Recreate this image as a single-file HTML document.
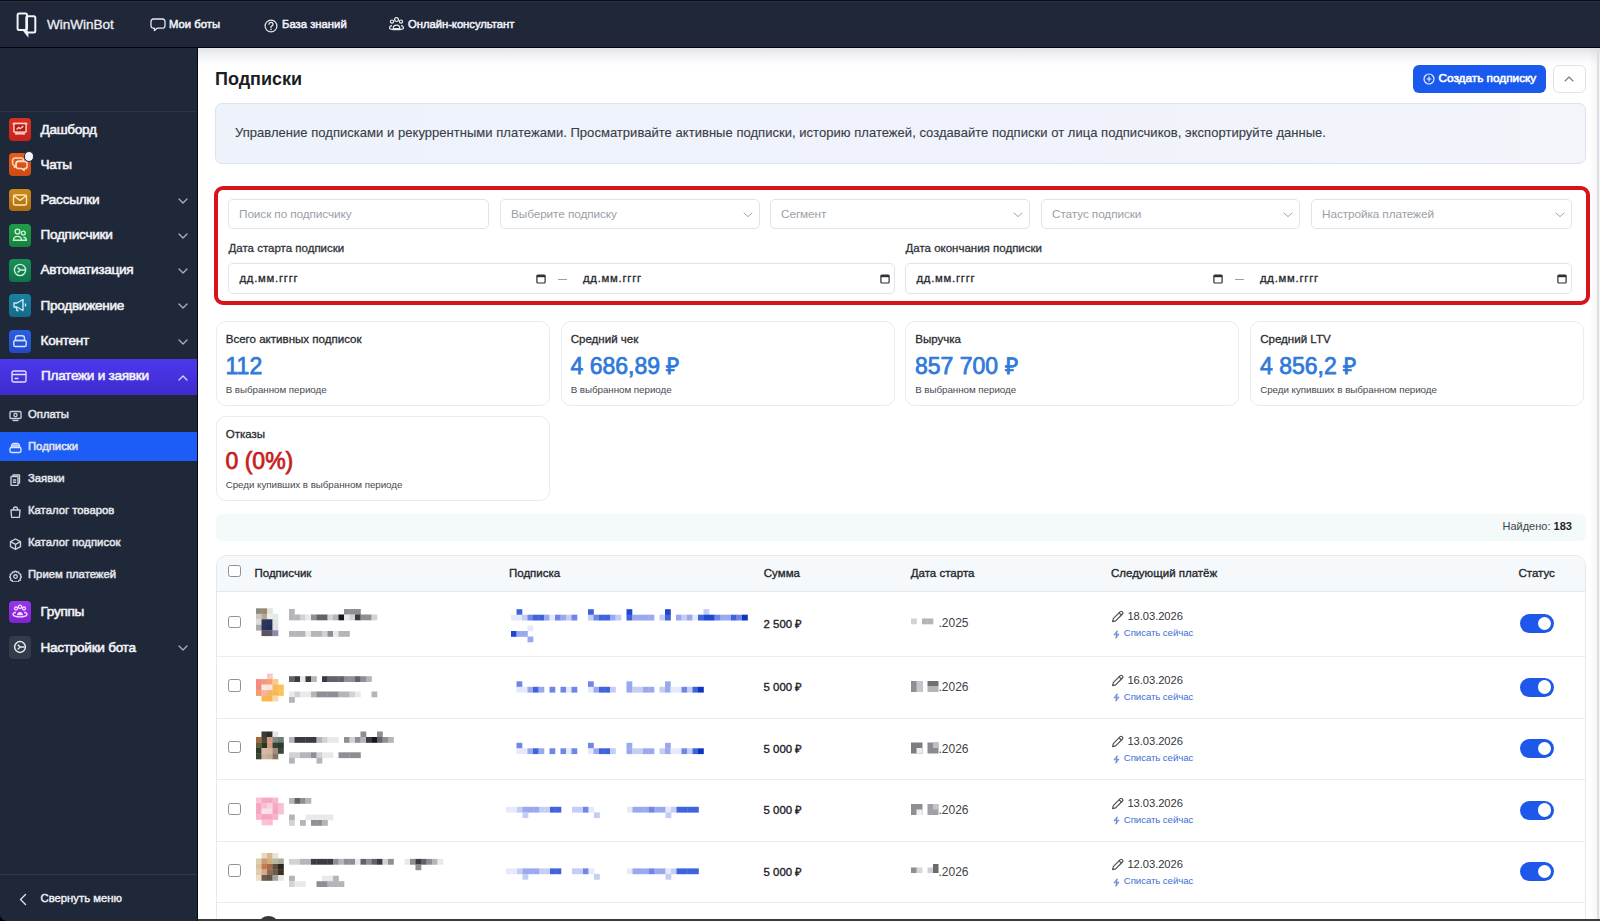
<!DOCTYPE html>
<html lang="ru">
<head>
<meta charset="utf-8">
<title>Подписки — WinWinBot</title>
<style>
*{box-sizing:border-box;margin:0;padding:0}
html,body{width:1600px;height:921px;overflow:hidden;background:#000}
body{font-family:"Liberation Sans",sans-serif;color:#222;position:relative}
.abs{position:absolute}
#hdr{position:absolute;left:0;top:0;width:1600px;height:48px;background:linear-gradient(#0c111b 0,#0c111b 1px,#272e3a 1.5px,#1f2739 3.5px);border-bottom:1.3px solid #03050a}
#side{position:absolute;left:0;top:48px;width:198px;height:873px;background:#1f2839;border-right:1px solid #06080d;border-bottom-left-radius:7px}
#main{position:absolute;left:198px;top:48px;width:1402px;height:873px;background:#fff;overflow:hidden}
#main .topshade{position:absolute;left:0;top:0;width:100%;height:18px;background:linear-gradient(#e2e3e7,#f3f3f5 45%,#fff)}
#main .rstrip{position:absolute;right:0;top:0;width:9px;height:100%;background:linear-gradient(90deg,rgba(0,0,0,.012),rgba(0,0,0,.04))}
#main .rstrip:after{content:"";position:absolute;right:1.5px;top:0;width:1.5px;height:100%;background:#dedee0}
#main .botline{position:absolute;left:0;bottom:0;width:100%;height:2px;background:#3a3a3c}
.t{position:absolute;white-space:nowrap;line-height:1}

.ibox{position:absolute;left:9px;width:22px;height:22.5px;border-radius:4px}
.ibox svg{position:absolute;left:0;top:0}
.slab{left:40.5px;font-size:13.6px;font-weight:400;color:#f2f3f6;-webkit-text-stroke:0.55px #f2f3f6;letter-spacing:-0.28px}
.chev{position:absolute;left:178px}
.ssub{left:28px;font-size:11.3px;font-weight:400;color:#e3e5ea;-webkit-text-stroke:0.5px #e3e5ea;letter-spacing:0px}

.pg{position:absolute;left:-198px;top:-48px;width:1600px;height:921px}
.inp{position:absolute;top:199px;height:30px;border:1px solid #e0e3e7;border-radius:5px;background:#fff}
.ph{font-size:11.8px;color:#9a9fa7;letter-spacing:-0.1px}
.flab{font-size:11.5px;font-weight:400;color:#30343b;-webkit-text-stroke:0.3px #30343b;letter-spacing:0px}
.dgrp{top:263px;height:31px;border:1px solid #e0e3e7;border-radius:5px;background:#fff}
.dph{font-size:11.3px;color:#26282d;letter-spacing:0.75px;-webkit-text-stroke:0.3px #26282d}
.card{position:absolute;width:334px;height:85px;border:1px solid #e9ebee;border-radius:10px;background:#fff}
.clab{font-size:11.55px;font-weight:400;color:#2a2d33;-webkit-text-stroke:0.3px #2a2d33;letter-spacing:0px}
.cval{font-size:23px;font-weight:400;letter-spacing:0px;-webkit-text-stroke:0.75px currentColor}
.csub{font-size:9.8px;color:#464a52;letter-spacing:-0.05px}

.th{font-size:11.5px;font-weight:400;color:#25282e;-webkit-text-stroke:0.35px #25282e;letter-spacing:0px}
.cb{position:absolute;left:228px;width:12.5px;height:12.5px;border:1px solid #8d9096;border-radius:2.5px;background:#fff}
.tsum{font-size:11.4px;font-weight:400;color:#1f2227;-webkit-text-stroke:0.35px #1f2227;letter-spacing:0px}
.tdate{font-size:12px;color:#404349;letter-spacing:0px}
.tnext{font-size:11.2px;color:#33363c;letter-spacing:-0.05px}
.tnow{font-size:9.7px;color:#3f6fd6;letter-spacing:-0.1px}
.tog{position:absolute;left:1519.5px;width:34.5px;height:19px;border-radius:10px;background:#1d58ea}
.tog i{position:absolute;right:3px;top:2.8px;width:13.4px;height:13.4px;border-radius:50%;background:#fff}
#main .rstrip,#main .botline{z-index:5}
</style>
</head>
<body>
<div id="hdr">
  <svg class="abs" style="left:0;top:0" width="48" height="48" viewBox="0 0 48 48">
    <g fill="none" stroke="#f1f3f8" stroke-width="2" stroke-linejoin="round">
      <rect x="17.6" y="13.4" width="9.4" height="16.6" rx="1.5"/>
      <rect x="26.3" y="16.2" width="9" height="16.2" rx="1.5"/>
    </g>
    <path d="M22.3 30 L28.4 37.8 L28.4 31.5 Z" fill="#f1f3f8"/>
  </svg>
  <div class="t" style="left:47px;top:18px;font-size:13.6px;color:#eceef3;letter-spacing:-0.05px;-webkit-text-stroke:0.3px #eceef3">WinWinBot</div>
  <svg class="abs" style="left:150px;top:17.5px" width="16" height="14" viewBox="0 0 16 14">
    <path d="M3.4 1h9.2a2.4 2.4 0 0 1 2.4 2.4v4.4a2.4 2.4 0 0 1-2.4 2.4H7.2l-2.8 2.4v-2.4h-1A2.4 2.4 0 0 1 1 7.8V3.4A2.4 2.4 0 0 1 3.4 1z" fill="none" stroke="#e8eaf0" stroke-width="1.3" stroke-linejoin="round"/>
  </svg>
  <div class="t" style="left:169px;top:19px;font-size:11.3px;font-weight:400;color:#f1f3f8;-webkit-text-stroke:0.5px #f1f3f8;letter-spacing:0px">Мои боты</div>
  <svg class="abs" style="left:262.5px;top:17.7px" width="16" height="16" viewBox="0 0 16 16">
    <circle cx="8" cy="8" r="5.9" fill="none" stroke="#e8eaf0" stroke-width="1.2"/>
    <path d="M6 6.3a2 2 0 1 1 2.6 1.9c-.5.2-.6.5-.6 1v.5" fill="none" stroke="#e8eaf0" stroke-width="1.3" stroke-linecap="round"/>
    <circle cx="8" cy="11.5" r=".8" fill="#e8eaf0"/>
  </svg>
  <div class="t" style="left:282px;top:19px;font-size:11.3px;font-weight:400;color:#f1f3f8;-webkit-text-stroke:0.5px #f1f3f8;letter-spacing:0px">База знаний</div>
  <svg class="abs" style="left:388px;top:16px" width="17" height="16" viewBox="0 0 17 16">
    <g fill="none" stroke="#e8eaf0" stroke-width="1.2">
      <circle cx="8.5" cy="3.6" r="1.9"/><circle cx="4" cy="5.6" r="1.6"/><circle cx="13" cy="5.6" r="1.6"/>
      <path d="M5.2 12.5c0-2 1.5-3.3 3.3-3.3s3.3 1.3 3.3 3.3z"/>
      <path d="M1.5 12.5c0-1.8 1-2.9 2.5-2.9M15.5 12.5c0-1.8-1-2.9-2.5-2.9M1.5 12.5c2 1.6 12 1.6 14 0"/>
    </g>
  </svg>
  <div class="t" style="left:408px;top:19px;font-size:11.3px;font-weight:400;color:#f1f3f8;-webkit-text-stroke:0.5px #f1f3f8;letter-spacing:-0.05px">Онлайн-консультант</div>
</div>
<div id="side">
<div class="abs" style="left:0;top:63px;width:197px;height:1px;background:#2c3546"></div>
<div class="ibox" style="top:70px;background:linear-gradient(180deg,#dc2e22,#c4231b)"><svg width="22" height="22" viewBox="0 0 22 22"><g fill="none" stroke="#ffcfc8" stroke-width="1.6" stroke-linejoin="round"><path d="M3.6 5.6h14.8"/><path d="M5 5.6h12v8.4H5z"/><path d="M7.6 14l-1 2.6M14.4 14l1 2.6M7.2 15.6h7.6"/></g><path d="M5.8 6.4h10.4v6.8H5.8z" fill="#b01c15"/><path d="M7.6 11.6l2.2-2.1 1.5 1.2 3-2.6" fill="none" stroke="#ffcfc8" stroke-width="1.4"/></svg></div>
<div class="t slab" style="top:75.0px">Дашборд</div>
<div class="ibox" style="top:105px;background:linear-gradient(180deg,#e65e1c,#cc4b14)"><svg width="22" height="22" viewBox="0 0 22 22"><g fill="none" stroke="#ffd9c2" stroke-width="1.5" stroke-linejoin="round"><path d="M6.2 5h5.8a2.6 2.6 0 0 1 2.6 2.6V8H9.5a2.4 2.4 0 0 0-2.4 2.4v2.8L5.5 14.4v-1.6A2.6 2.6 0 0 1 3.6 10.3V7.6A2.6 2.6 0 0 1 6.2 5z"/><path d="M9.5 8.4h6.2a2.4 2.4 0 0 1 2.4 2.4v2.4a2.4 2.4 0 0 1-2.4 2.4h-.6v1.8l-2.2-1.8H9.5a2.4 2.4 0 0 1-2.4-2.4v-2.4a2.4 2.4 0 0 1 2.4-2.4z"/></g></svg></div>
<div class="t slab" style="top:110.0px">Чаты</div>
<div class="ibox" style="top:140.5px;background:linear-gradient(180deg,#cc8a1c,#aa6c12)"><svg width="22" height="22" viewBox="0 0 22 22"><g fill="none" stroke="#ffe7b3" stroke-width="1.4" stroke-linejoin="round"><rect x="4.5" y="6" width="13" height="10" rx="1.5"/><path d="M4.8 6.8l6.2 4.6 6.2-4.6"/></g></svg></div>
<div class="t slab" style="top:144.70px">Рассылки</div>
<svg class="chev" style="top:149.5px" width="10" height="6" viewBox="0 0 10 6"><path d="M1 1l4 4 4-4" fill="none" stroke="#aab0bd" stroke-width="1.3" stroke-linecap="round" stroke-linejoin="round"/></svg>
<div class="ibox" style="top:176px;background:linear-gradient(180deg,#1f9d4b,#17823d)"><svg width="22" height="22" viewBox="0 0 22 22"><g fill="none" stroke="#c9f5d5" stroke-width="1.4"><circle cx="8.5" cy="7.5" r="2.4"/><circle cx="14.3" cy="9" r="1.9"/><path d="M4.5 16.3c0-2.4 1.8-3.9 4-3.9s4 1.5 4 3.9zM12.8 16.3h4.5c0-2-1.2-3.2-3-3.2"/></g></svg></div>
<div class="t slab" style="top:180.20px">Подписчики</div>
<svg class="chev" style="top:185px" width="10" height="6" viewBox="0 0 10 6"><path d="M1 1l4 4 4-4" fill="none" stroke="#aab0bd" stroke-width="1.3" stroke-linecap="round" stroke-linejoin="round"/></svg>
<div class="ibox" style="top:211px;background:linear-gradient(180deg,#188e5a,#10734a)"><svg width="22" height="22" viewBox="0 0 22 22"><g fill="none" stroke="#c7f2de" stroke-width="1.4"><circle cx="11" cy="11" r="5.6"/><path d="M8.5 8.6l3 2.4-3 2.4M11.5 11h4.5"/></g></svg></div>
<div class="t slab" style="top:215.20px">Автоматизация</div>
<svg class="chev" style="top:220px" width="10" height="6" viewBox="0 0 10 6"><path d="M1 1l4 4 4-4" fill="none" stroke="#aab0bd" stroke-width="1.3" stroke-linecap="round" stroke-linejoin="round"/></svg>
<div class="ibox" style="top:246.3px;background:linear-gradient(180deg,#1b81a1,#156a86)"><svg width="22" height="22" viewBox="0 0 22 22"><g fill="none" stroke="#c8ecf7" stroke-width="1.4" stroke-linejoin="round"><path d="M5 9h3l6-3.5v11L8 13H5z"/><path d="M7 13l1 3.5h1.5"/><path d="M16.5 9.5v3"/></g></svg></div>
<div class="t slab" style="top:250.50px">Продвижение</div>
<svg class="chev" style="top:255.3px" width="10" height="6" viewBox="0 0 10 6"><path d="M1 1l4 4 4-4" fill="none" stroke="#aab0bd" stroke-width="1.3" stroke-linecap="round" stroke-linejoin="round"/></svg>
<div class="ibox" style="top:282px;background:linear-gradient(180deg,#2d5fe4,#2249c4)"><svg width="22" height="22" viewBox="0 0 22 22"><g fill="none" stroke="#d4e0ff" stroke-width="1.4" stroke-linejoin="round"><path d="M6.5 10.5V8.3a2.5 2.5 0 0 1 2.5-2.5h4a2.5 2.5 0 0 1 2.5 2.5v2.2"/><rect x="4.8" y="10.5" width="12.4" height="6" rx="1.5"/><path d="M6.5 10.5h9"/></g></svg></div>
<div class="t slab" style="top:286.20px">Контент</div>
<svg class="chev" style="top:291px" width="10" height="6" viewBox="0 0 10 6"><path d="M1 1l4 4 4-4" fill="none" stroke="#aab0bd" stroke-width="1.3" stroke-linecap="round" stroke-linejoin="round"/></svg>
<div class="abs" style="left:23.8px;top:103.3px;width:10.4px;height:10.4px;border-radius:50%;background:#f4f5f8;border:1.4px solid #1f2839"></div>
<div class="abs" style="left:0;top:311px;width:197px;height:35.5px;background:linear-gradient(180deg,#4b38ec,#3f2bcf)"></div>
<svg class="abs" style="left:11px;top:322px" width="16" height="13" viewBox="0 0 16 13"><g fill="none" stroke="#e2dcff" stroke-width="1.4" stroke-linejoin="round"><rect x="1" y="1" width="14" height="11" rx="1.8"/><path d="M1 4.5h14M3.5 8.5h4"/></g></svg>
<div class="t slab" style="top:321.20px;left:41px">Платежи и заявки</div>
<svg class="chev" style="top:327px" width="10" height="6" viewBox="0 0 10 6"><path d="M1 5l4-4 4 4" fill="none" stroke="#d8d3ff" stroke-width="1.3" stroke-linecap="round" stroke-linejoin="round"/></svg>
<div class="abs" style="left:0;top:384px;width:197px;height:29px;background:#1b5df6"></div>
<div class="abs" style="left:9px;top:360px"><svg width="13" height="12" viewBox="0 0 13 12"><g fill="none" stroke="#cdd1d8" stroke-width="1.35"><rect x="1" y="1.5" width="11" height="7" rx="1"/><path d="M3.5 10.5h6"/><circle cx="6.5" cy="5" r="1.6"/></g></svg></div>
<div class="t ssub" style="top:361.20px">Оплаты</div>
<div class="abs" style="left:9px;top:392px"><svg width="13" height="12" viewBox="0 0 13 12"><g fill="none" stroke="#dce6ff" stroke-width="1.4" stroke-linejoin="round"><path d="M2.5 5.5V4a2.5 2.5 0 0 1 2.5-2.5h3A2.5 2.5 0 0 1 10.5 4v1.5"/><rect x="1" y="5.5" width="11" height="5" rx="1.4"/></g><path d="M3 5.3V4.2a2 2 0 0 1 2-2h3a2 2 0 0 1 2 2v1.1z" fill="#dce6ff" opacity=".8"/></svg></div>
<div class="t ssub" style="top:393.20px">Подписки</div>
<div class="abs" style="left:9px;top:424px"><svg width="13" height="12" viewBox="0 0 13 12"><g fill="none" stroke="#cdd1d8" stroke-width="1.35" stroke-linejoin="round"><path d="M4 2.5V1h6.5v8H9"/><rect x="2" y="2.5" width="7" height="9" rx=".8"/><path d="M3.8 6h3.4M3.8 8.2h3.4"/></g></svg></div>
<div class="t ssub" style="top:425.20px">Заявки</div>
<div class="abs" style="left:9px;top:456px"><svg width="13" height="12" viewBox="0 0 13 12"><g fill="none" stroke="#cdd1d8" stroke-width="1.35" stroke-linejoin="round"><path d="M2 4h9l-.6 7.3H2.6z"/><path d="M4.5 4V3a2 2 0 0 1 4 0v1"/></g></svg></div>
<div class="t ssub" style="top:457.20px">Каталог товаров</div>
<div class="abs" style="left:9px;top:488px"><svg width="13" height="12" viewBox="0 0 13 12"><g fill="none" stroke="#cdd1d8" stroke-width="1.35" stroke-linejoin="round"><path d="M6.5 1l5 2.7v5L6.5 11.3 1.5 8.7v-5z"/><path d="M1.5 3.7l5 2.7 5-2.7M6.5 6.4v4.9"/></g></svg></div>
<div class="t ssub" style="top:489.20px">Каталог подписок</div>
<div class="abs" style="left:9px;top:520px"><svg width="13" height="12" viewBox="0 0 13 12"><g fill="none" stroke="#cdd1d8" stroke-width="1.35" stroke-linejoin="round"><path d="M6.5.8l1.2 1.4 1.8-.3.6 1.7 1.7.7-.3 1.8L12.6 7l-1.4 1.2.3 1.8-1.7.6-.7 1.6L7.3 11.9 6.5 11.2"/><path d="M6.5.8L5.3 2.2 3.5 1.9l-.6 1.7-1.7.7.3 1.8L.4 7l1.4 1.2-.3 1.8 1.7.6.7 1.6 1.8-.3.8.7"/><circle cx="6.5" cy="6.5" r="1.8"/></g></svg></div>
<div class="t ssub" style="top:521.20px">Прием платежей</div>
<div class="ibox" style="top:552.5px;background:linear-gradient(180deg,#9a35ec,#7f22d6)"><svg width="22" height="22" viewBox="0 0 22 22"><g fill="none" stroke="#f4dcff" stroke-width="1.3"><circle cx="11" cy="5.8" r="1.7"/><circle cx="7" cy="7.5" r="1.5"/><circle cx="15" cy="7.5" r="1.5"/><path d="M4 14c0-1.6 1.2-2.6 3-2.6M18 14c0-1.6-1.2-2.6-3-2.6M4 14c2.5 2.5 11.5 2.5 14 0"/></g><path d="M8 14.3c0-1.9 1.3-3.2 3-3.2s3 1.3 3 3.2z" fill="#f4dcff"/></svg></div>
<div class="t slab" style="top:557.20px">Группы</div>
<div class="ibox" style="top:588px;background:#333c4b"><svg width="22" height="22" viewBox="0 0 22 22"><g fill="none" stroke="#e6e8ee" stroke-width="1.5"><circle cx="11" cy="11" r="5.4"/><path d="M8.7 8.7l2.6 2.3-2.6 2.3M11.3 11h4.3"/></g></svg></div>
<div class="t slab" style="top:592.70px">Настройки бота</div>
<svg class="chev" style="top:597px" width="10" height="6" viewBox="0 0 10 6"><path d="M1 1l4 4 4-4" fill="none" stroke="#aab0bd" stroke-width="1.3" stroke-linecap="round" stroke-linejoin="round"/></svg>
<div class="abs" style="left:0;top:826px;width:197px;height:1px;background:#2f394a"></div>
<svg class="abs" style="left:18px;top:845px" width="10" height="13" viewBox="0 0 10 13"><path d="M7.5 1.5L2.5 6.5l5 5" fill="none" stroke="#dfe2e8" stroke-width="1.4" stroke-linecap="round" stroke-linejoin="round"/></svg>
<div class="t ssub" style="top:844.70px;left:40.5px;color:#f1f2f5;-webkit-text-stroke:0.4px #f1f2f5">Свернуть меню</div>
</div>
<div id="main">
  <div class="topshade"></div>
  <div class="rstrip"></div>
  <div class="botline"></div>
<div class="pg">
<div class="t" style="left:215px;top:70.2px;font-size:18px;font-weight:700;color:#1b1d22;letter-spacing:0px">Подписки</div>
<div class="abs" style="left:1413px;top:65px;width:133px;height:27.5px;border-radius:6px;background:#1959ee"></div>
<svg class="abs" style="left:1423px;top:73px" width="12" height="12" viewBox="0 0 12 12"><g fill="none" stroke="#e8efff" stroke-width="1.2"><circle cx="6" cy="6" r="5"/><path d="M6 3.6v4.8M3.6 6h4.8"/></g></svg>
<div class="t" style="left:1438.5px;top:73.18px;font-size:11.8px;font-weight:400;color:#fff;-webkit-text-stroke:0.6px #fff;letter-spacing:0px">Создать подписку</div>
<div class="abs" style="left:1552.5px;top:65px;width:33px;height:27.5px;border-radius:6px;background:#fff;border:1px solid #dfe2e6"></div>
<svg class="abs" style="left:1564px;top:76px" width="10" height="6" viewBox="0 0 10 6"><path d="M1 5l4-4 4 4" fill="none" stroke="#777b83" stroke-width="1.1" stroke-linecap="round" stroke-linejoin="round"/></svg>
<div class="abs" style="left:215px;top:103px;width:1371px;height:61px;border-radius:7px;background:linear-gradient(90deg,#eef2fb,#f0f3fb 60%,#f3f5fb);border:1px solid #dae3ef"></div>
<div class="t" style="left:235px;top:126.4px;font-size:13px;color:#383d47;letter-spacing:0.035px;-webkit-text-stroke:0.12px #383d47">Управление подписками и рекуррентными платежами. Просматривайте активные подписки, историю платежей, создавайте подписки от лица подписчиков, экспортируйте данные.</div>
<div class="abs" style="left:213.5px;top:185.5px;width:1376.5px;height:119.5px;border-radius:9px;border:4px solid #d8141b;background:#fff"></div>
<div class="inp" style="left:228px;width:261px"></div>
<div class="t ph" style="left:239px;top:208.81px">Поиск по подписчику</div>
<div class="inp" style="left:500px;width:260px"></div>
<div class="t ph" style="left:511px;top:208.81px">Выберите подписку</div>
<svg class="abs" style="left:743.0px;top:212px" width="10" height="6" viewBox="0 0 10 6"><path d="M1 1l4 3.6 4-3.6" fill="none" stroke="#9ea3ab" stroke-width="1" stroke-linecap="round" stroke-linejoin="round"/></svg>
<div class="inp" style="left:770px;width:260px"></div>
<div class="t ph" style="left:781px;top:208.81px">Сегмент</div>
<svg class="abs" style="left:1013.0px;top:212px" width="10" height="6" viewBox="0 0 10 6"><path d="M1 1l4 3.6 4-3.6" fill="none" stroke="#9ea3ab" stroke-width="1" stroke-linecap="round" stroke-linejoin="round"/></svg>
<div class="inp" style="left:1041px;width:259px"></div>
<div class="t ph" style="left:1052px;top:208.81px">Статус подписки</div>
<svg class="abs" style="left:1283.0px;top:212px" width="10" height="6" viewBox="0 0 10 6"><path d="M1 1l4 3.6 4-3.6" fill="none" stroke="#9ea3ab" stroke-width="1" stroke-linecap="round" stroke-linejoin="round"/></svg>
<div class="inp" style="left:1311px;width:261px"></div>
<div class="t ph" style="left:1322px;top:208.81px">Настройка платежей</div>
<svg class="abs" style="left:1555.0px;top:212px" width="10" height="6" viewBox="0 0 10 6"><path d="M1 1l4 3.6 4-3.6" fill="none" stroke="#9ea3ab" stroke-width="1" stroke-linecap="round" stroke-linejoin="round"/></svg>
<div class="t flab" style="left:228.5px;top:243.29px">Дата старта подписки</div>
<div class="t flab" style="left:905.5px;top:243.29px">Дата окончания подписки</div>
<div class="abs dgrp" style="left:228px;width:667px"></div>
<div class="t dph" style="left:239.5px;top:273.03px">дд.мм.гггг</div>
<svg class="abs" style="left:535.8px;top:273.8px" width="10" height="10" viewBox="0 0 10 10"><rect x="0.9" y="1.2" width="8.2" height="7.8" rx="0.9" fill="none" stroke="#2b2d33" stroke-width="1.2"/><path d="M.9 1.2h8.2v2H.9z" fill="#2b2d33"/></svg>
<div class="abs" style="left:558px;top:278.5px;width:8.5px;height:1px;background:#9a9ea6"></div>
<div class="t dph" style="left:583px;top:273.03px">дд.мм.гггг</div>
<svg class="abs" style="left:879.8px;top:273.8px" width="10" height="10" viewBox="0 0 10 10"><rect x="0.9" y="1.2" width="8.2" height="7.8" rx="0.9" fill="none" stroke="#2b2d33" stroke-width="1.2"/><path d="M.9 1.2h8.2v2H.9z" fill="#2b2d33"/></svg>
<div class="abs dgrp" style="left:905px;width:667px"></div>
<div class="t dph" style="left:916.5px;top:273.03px">дд.мм.гггг</div>
<svg class="abs" style="left:1212.8px;top:273.8px" width="10" height="10" viewBox="0 0 10 10"><rect x="0.9" y="1.2" width="8.2" height="7.8" rx="0.9" fill="none" stroke="#2b2d33" stroke-width="1.2"/><path d="M.9 1.2h8.2v2H.9z" fill="#2b2d33"/></svg>
<div class="abs" style="left:1235px;top:278.5px;width:8.5px;height:1px;background:#9a9ea6"></div>
<div class="t dph" style="left:1260px;top:273.03px">дд.мм.гггг</div>
<svg class="abs" style="left:1556.8px;top:273.8px" width="10" height="10" viewBox="0 0 10 10"><rect x="0.9" y="1.2" width="8.2" height="7.8" rx="0.9" fill="none" stroke="#2b2d33" stroke-width="1.2"/><path d="M.9 1.2h8.2v2H.9z" fill="#2b2d33"/></svg>
<div class="card" style="left:215.5px;top:320.5px"></div>
<div class="t clab" style="left:225.7px;top:334.49px">Всего активных подписок</div>
<div class="t cval" style="left:225.5px;top:354.70px;color:#2f7ad9">112</div>
<div class="t csub" style="left:225.7px;top:384.80px">В выбранном периоде</div>
<div class="card" style="left:560.5px;top:320.5px"></div>
<div class="t clab" style="left:570.7px;top:334.49px">Средний чек</div>
<div class="t cval" style="left:570.5px;top:354.70px;color:#2f7ad9">4 686,89 ₽</div>
<div class="t csub" style="left:570.7px;top:384.80px">В выбранном периоде</div>
<div class="card" style="left:905px;top:320.5px"></div>
<div class="t clab" style="left:915.2px;top:334.49px">Выручка</div>
<div class="t cval" style="left:915px;top:354.70px;color:#2f7ad9">857 700 ₽</div>
<div class="t csub" style="left:915.2px;top:384.80px">В выбранном периоде</div>
<div class="card" style="left:1250px;top:320.5px"></div>
<div class="t clab" style="left:1260.2px;top:334.49px">Средний LTV</div>
<div class="t cval" style="left:1260px;top:354.70px;color:#2f7ad9">4 856,2 ₽</div>
<div class="t csub" style="left:1260.2px;top:384.80px">Среди купивших в выбранном периоде</div>
<div class="card" style="left:215.5px;top:415.5px"></div>
<div class="t clab" style="left:225.7px;top:429.49px">Отказы</div>
<div class="t cval" style="left:225.5px;top:449.70px;color:#c81d1d">0 (0%)</div>
<div class="t csub" style="left:225.7px;top:479.80px">Среди купивших в выбранном периоде</div>
<div class="abs" style="left:215.5px;top:513.5px;width:1370px;height:27px;border-radius:6px;background:#f4f9fa"></div>
<div class="t" style="left:1502.5px;top:521.29px;font-size:11px;color:#3d424a">Найдено: <b style="color:#22252b">183</b></div>
<!--TABLE-->
<div class="abs" style="left:215.5px;top:555px;width:1370px;height:380px;border:1px solid #e6e8eb;border-radius:11px 11px 0 0;background:#fff;overflow:hidden"><div style="height:36px;background:#f5f9fb;border-bottom:1px solid #e3e8ec"></div></div>
<div class="t th" style="left:254.5px;top:568.07px">Подписчик</div>
<div class="t th" style="left:509px;top:568.07px">Подписка</div>
<div class="t th" style="left:763.8px;top:568.07px">Сумма</div>
<div class="t th" style="left:910.8px;top:568.07px">Дата старта</div>
<div class="t th" style="left:1111px;top:568.07px">Следующий платёж</div>
<div class="t th" style="left:1518.5px;top:568.07px">Статус</div>
<div class="cb" style="top:564.5px"></div>
<div class="abs" style="left:216.5px;top:655.8px;width:1368px;height:1px;background:#eaedf0"></div>
<div class="abs" style="left:216.5px;top:717.5px;width:1368px;height:1px;background:#eaedf0"></div>
<div class="abs" style="left:216.5px;top:778.9px;width:1368px;height:1px;background:#eaedf0"></div>
<div class="abs" style="left:216.5px;top:840.7px;width:1368px;height:1px;background:#eaedf0"></div>
<div class="abs" style="left:216.5px;top:902.1px;width:1368px;height:1px;background:#eaedf0"></div>
<div class="cb" style="top:615.8000000000001px"></div>
<div class="t tsum" style="left:763.6px;top:618.55px">2 500 ₽</div>
<div class="t tdate" style="left:938.5px;top:617.44px">.2025</div>
<svg class="abs" style="left:1111px;top:610.1px" width="13" height="13" viewBox="0 0 13 13"><path d="M1.6 11.6l.7-3 6.9-6.9a1.3 1.3 0 0 1 1.8 0l.5.5a1.3 1.3 0 0 1 0 1.8L4.6 10.9z" fill="none" stroke="#4a4d53" stroke-width="1.15" stroke-linejoin="round"/><path d="M8.1 2.8l2.2 2.2" stroke="#4a4d53" stroke-width="1.1"/></svg>
<div class="t tnext" style="left:1127.4px;top:611.12px">18.03.2026</div>
<svg class="abs" style="left:1111.5px;top:629.6px" width="9" height="9" viewBox="0 0 9 9"><path d="M5.2 .8L2 4.8h2.8L3.8 8.2 7 4.2H4.2z" fill="none" stroke="#4b77d9" stroke-width=".9" stroke-linejoin="round"/></svg>
<div class="t tnow" style="left:1123.8px;top:628.19px">Списать сейчас</div>
<div class="tog" style="top:614.0px"><i></i></div>
<div class="cb" style="top:679.4000000000001px"></div>
<div class="t tsum" style="left:763.6px;top:682.15px">5 000 ₽</div>
<div class="t tdate" style="left:938.5px;top:681.04px">.2026</div>
<svg class="abs" style="left:1111px;top:673.7px" width="13" height="13" viewBox="0 0 13 13"><path d="M1.6 11.6l.7-3 6.9-6.9a1.3 1.3 0 0 1 1.8 0l.5.5a1.3 1.3 0 0 1 0 1.8L4.6 10.9z" fill="none" stroke="#4a4d53" stroke-width="1.15" stroke-linejoin="round"/><path d="M8.1 2.8l2.2 2.2" stroke="#4a4d53" stroke-width="1.1"/></svg>
<div class="t tnext" style="left:1127.4px;top:674.72px">16.03.2026</div>
<svg class="abs" style="left:1111.5px;top:693.2px" width="9" height="9" viewBox="0 0 9 9"><path d="M5.2 .8L2 4.8h2.8L3.8 8.2 7 4.2H4.2z" fill="none" stroke="#4b77d9" stroke-width=".9" stroke-linejoin="round"/></svg>
<div class="t tnow" style="left:1123.8px;top:691.79px">Списать сейчас</div>
<div class="tog" style="top:677.6px"><i></i></div>
<div class="cb" style="top:740.9000000000001px"></div>
<div class="t tsum" style="left:763.6px;top:743.65px">5 000 ₽</div>
<div class="t tdate" style="left:938.5px;top:742.54px">.2026</div>
<svg class="abs" style="left:1111px;top:735.2px" width="13" height="13" viewBox="0 0 13 13"><path d="M1.6 11.6l.7-3 6.9-6.9a1.3 1.3 0 0 1 1.8 0l.5.5a1.3 1.3 0 0 1 0 1.8L4.6 10.9z" fill="none" stroke="#4a4d53" stroke-width="1.15" stroke-linejoin="round"/><path d="M8.1 2.8l2.2 2.2" stroke="#4a4d53" stroke-width="1.1"/></svg>
<div class="t tnext" style="left:1127.4px;top:736.22px">13.03.2026</div>
<svg class="abs" style="left:1111.5px;top:754.7px" width="9" height="9" viewBox="0 0 9 9"><path d="M5.2 .8L2 4.8h2.8L3.8 8.2 7 4.2H4.2z" fill="none" stroke="#4b77d9" stroke-width=".9" stroke-linejoin="round"/></svg>
<div class="t tnow" style="left:1123.8px;top:753.29px">Списать сейчас</div>
<div class="tog" style="top:739.1px"><i></i></div>
<div class="cb" style="top:802.5px"></div>
<div class="t tsum" style="left:763.6px;top:805.25px">5 000 ₽</div>
<div class="t tdate" style="left:938.5px;top:804.14px">.2026</div>
<svg class="abs" style="left:1111px;top:796.8px" width="13" height="13" viewBox="0 0 13 13"><path d="M1.6 11.6l.7-3 6.9-6.9a1.3 1.3 0 0 1 1.8 0l.5.5a1.3 1.3 0 0 1 0 1.8L4.6 10.9z" fill="none" stroke="#4a4d53" stroke-width="1.15" stroke-linejoin="round"/><path d="M8.1 2.8l2.2 2.2" stroke="#4a4d53" stroke-width="1.1"/></svg>
<div class="t tnext" style="left:1127.4px;top:797.82px">13.03.2026</div>
<svg class="abs" style="left:1111.5px;top:816.3px" width="9" height="9" viewBox="0 0 9 9"><path d="M5.2 .8L2 4.8h2.8L3.8 8.2 7 4.2H4.2z" fill="none" stroke="#4b77d9" stroke-width=".9" stroke-linejoin="round"/></svg>
<div class="t tnow" style="left:1123.8px;top:814.89px">Списать сейчас</div>
<div class="tog" style="top:800.6999999999999px"><i></i></div>
<div class="cb" style="top:864.1px"></div>
<div class="t tsum" style="left:763.6px;top:866.85px">5 000 ₽</div>
<div class="t tdate" style="left:938.5px;top:865.74px">.2026</div>
<svg class="abs" style="left:1111px;top:858.4px" width="13" height="13" viewBox="0 0 13 13"><path d="M1.6 11.6l.7-3 6.9-6.9a1.3 1.3 0 0 1 1.8 0l.5.5a1.3 1.3 0 0 1 0 1.8L4.6 10.9z" fill="none" stroke="#4a4d53" stroke-width="1.15" stroke-linejoin="round"/><path d="M8.1 2.8l2.2 2.2" stroke="#4a4d53" stroke-width="1.1"/></svg>
<div class="t tnext" style="left:1127.4px;top:859.42px">12.03.2026</div>
<svg class="abs" style="left:1111.5px;top:877.9px" width="9" height="9" viewBox="0 0 9 9"><path d="M5.2 .8L2 4.8h2.8L3.8 8.2 7 4.2H4.2z" fill="none" stroke="#4b77d9" stroke-width=".9" stroke-linejoin="round"/></svg>
<div class="t tnow" style="left:1123.8px;top:876.49px">Списать сейчас</div>
<div class="tog" style="top:862.3px"><i></i></div>
<svg class="abs" style="left:0;top:0" width="1600" height="921"><rect x="256.00" y="608.30" width="5.80" height="5.80" fill="#8c8a7e"/><rect x="261.50" y="608.30" width="5.80" height="5.80" fill="#9c8870"/><rect x="267.00" y="608.30" width="5.80" height="5.80" fill="#e6e3de"/><rect x="256.00" y="613.80" width="5.80" height="5.80" fill="#c9c8bf"/><rect x="261.50" y="613.80" width="5.80" height="5.80" fill="#b9a990"/><rect x="267.00" y="613.80" width="5.80" height="5.80" fill="#ececea"/><rect x="272.50" y="613.80" width="5.80" height="5.80" fill="#e4e9ec"/><rect x="256.00" y="619.30" width="5.80" height="5.80" fill="#dcdcd8"/><rect x="261.50" y="619.30" width="5.80" height="5.80" fill="#2e3660"/><rect x="267.00" y="619.30" width="5.80" height="5.80" fill="#2a3358"/><rect x="272.50" y="619.30" width="5.80" height="5.80" fill="#dfe4e8"/><rect x="256.00" y="624.80" width="5.80" height="5.80" fill="#a9a9a5"/><rect x="261.50" y="624.80" width="5.80" height="5.80" fill="#2a335b"/><rect x="267.00" y="624.80" width="5.80" height="5.80" fill="#243059"/><rect x="272.50" y="624.80" width="5.80" height="5.80" fill="#dde2e8"/><rect x="261.50" y="630.30" width="5.80" height="5.80" fill="#5d5265"/><rect x="267.00" y="630.30" width="5.80" height="5.80" fill="#5a5668"/><rect x="272.50" y="630.30" width="5.80" height="5.80" fill="#8d8ca3"/><rect x="289.00" y="609.00" width="5.80" height="5.80" fill="#b4b4b9"/><rect x="344.00" y="609.00" width="5.80" height="5.80" fill="#8e8e94"/><rect x="349.50" y="609.00" width="5.80" height="5.80" fill="#8e8e94"/><rect x="355.00" y="609.00" width="5.80" height="5.80" fill="#8e8e94"/><rect x="289.00" y="614.50" width="5.80" height="5.80" fill="#b4b4b9"/><rect x="294.50" y="614.50" width="5.80" height="5.80" fill="#b4b4b9"/><rect x="300.00" y="614.50" width="5.80" height="5.80" fill="#d2d2d6"/><rect x="305.50" y="614.50" width="5.80" height="5.80" fill="#e9e9ec"/><rect x="311.00" y="614.50" width="5.80" height="5.80" fill="#8e8e94"/><rect x="316.50" y="614.50" width="5.80" height="5.80" fill="#626268"/><rect x="322.00" y="614.50" width="5.80" height="5.80" fill="#626268"/><rect x="327.50" y="614.50" width="5.80" height="5.80" fill="#d2d2d6"/><rect x="333.00" y="614.50" width="5.80" height="5.80" fill="#b4b4b9"/><rect x="338.50" y="614.50" width="5.80" height="5.80" fill="#16161c"/><rect x="344.00" y="614.50" width="5.80" height="5.80" fill="#e9e9ec"/><rect x="349.50" y="614.50" width="5.80" height="5.80" fill="#d2d2d6"/><rect x="355.00" y="614.50" width="5.80" height="5.80" fill="#3a3a40"/><rect x="360.50" y="614.50" width="5.80" height="5.80" fill="#8e8e94"/><rect x="366.00" y="614.50" width="5.80" height="5.80" fill="#8e8e94"/><rect x="371.50" y="614.50" width="5.80" height="5.80" fill="#d2d2d6"/><rect x="289.00" y="631.00" width="5.80" height="5.80" fill="#b4b4b9"/><rect x="294.50" y="631.00" width="5.80" height="5.80" fill="#b4b4b9"/><rect x="300.00" y="631.00" width="5.80" height="5.80" fill="#b4b4b9"/><rect x="305.50" y="631.00" width="5.80" height="5.80" fill="#e9e9ec"/><rect x="311.00" y="631.00" width="5.80" height="5.80" fill="#b4b4b9"/><rect x="316.50" y="631.00" width="5.80" height="5.80" fill="#b4b4b9"/><rect x="322.00" y="631.00" width="5.80" height="5.80" fill="#d2d2d6"/><rect x="327.50" y="631.00" width="5.80" height="5.80" fill="#8e8e94"/><rect x="333.00" y="631.00" width="5.80" height="5.80" fill="#e9e9ec"/><rect x="338.50" y="631.00" width="5.80" height="5.80" fill="#b4b4b9"/><rect x="344.00" y="631.00" width="5.80" height="5.80" fill="#b4b4b9"/><rect x="267.00" y="673.60" width="5.80" height="5.80" fill="#f6c9cf"/><rect x="256.00" y="679.10" width="5.80" height="5.80" fill="#f58a84"/><rect x="261.50" y="679.10" width="5.80" height="5.80" fill="#f49a78"/><rect x="267.00" y="679.10" width="5.80" height="5.80" fill="#f3a56c"/><rect x="272.50" y="679.10" width="5.80" height="5.80" fill="#f7c98f"/><rect x="256.00" y="684.60" width="5.80" height="5.80" fill="#f38a7c"/><rect x="261.50" y="684.60" width="5.80" height="5.80" fill="#f8e8e2"/><rect x="267.00" y="684.60" width="5.80" height="5.80" fill="#fbe3d8"/><rect x="272.50" y="684.60" width="5.80" height="5.80" fill="#f5b960"/><rect x="278.00" y="684.60" width="5.80" height="5.80" fill="#fbc05a"/><rect x="256.00" y="690.10" width="5.80" height="5.80" fill="#f59a6e"/><rect x="261.50" y="690.10" width="5.80" height="5.80" fill="#f7b2a0"/><rect x="267.00" y="690.10" width="5.80" height="5.80" fill="#f6b268"/><rect x="272.50" y="690.10" width="5.80" height="5.80" fill="#f7b752"/><rect x="278.00" y="690.10" width="5.80" height="5.80" fill="#fbc25c"/><rect x="261.50" y="695.60" width="5.80" height="5.80" fill="#f8b64c"/><rect x="267.00" y="695.60" width="5.80" height="5.80" fill="#f7b548"/><rect x="272.50" y="695.60" width="5.80" height="5.80" fill="#fbd8a0"/><rect x="289.00" y="676.20" width="5.80" height="5.80" fill="#626268"/><rect x="294.50" y="676.20" width="5.80" height="5.80" fill="#3a3a40"/><rect x="300.00" y="676.20" width="5.80" height="5.80" fill="#e9e9ec"/><rect x="305.50" y="676.20" width="5.80" height="5.80" fill="#3a3a40"/><rect x="311.00" y="676.20" width="5.80" height="5.80" fill="#b4b4b9"/><rect x="322.00" y="676.20" width="5.80" height="5.80" fill="#3a3a40"/><rect x="327.50" y="676.20" width="5.80" height="5.80" fill="#626268"/><rect x="333.00" y="676.20" width="5.80" height="5.80" fill="#626268"/><rect x="338.50" y="676.20" width="5.80" height="5.80" fill="#626268"/><rect x="344.00" y="676.20" width="5.80" height="5.80" fill="#8e8e94"/><rect x="349.50" y="676.20" width="5.80" height="5.80" fill="#8e8e94"/><rect x="355.00" y="676.20" width="5.80" height="5.80" fill="#626268"/><rect x="360.50" y="676.20" width="5.80" height="5.80" fill="#8e8e94"/><rect x="366.00" y="676.20" width="5.80" height="5.80" fill="#b4b4b9"/><rect x="289.00" y="691.50" width="5.80" height="5.80" fill="#e9e9ec"/><rect x="294.50" y="691.50" width="5.80" height="5.80" fill="#d2d2d6"/><rect x="300.00" y="691.50" width="5.80" height="5.80" fill="#e9e9ec"/><rect x="305.50" y="691.50" width="5.80" height="5.80" fill="#e9e9ec"/><rect x="311.00" y="691.50" width="5.80" height="5.80" fill="#b4b4b9"/><rect x="316.50" y="691.50" width="5.80" height="5.80" fill="#8e8e94"/><rect x="322.00" y="691.50" width="5.80" height="5.80" fill="#8e8e94"/><rect x="327.50" y="691.50" width="5.80" height="5.80" fill="#8e8e94"/><rect x="333.00" y="691.50" width="5.80" height="5.80" fill="#8e8e94"/><rect x="338.50" y="691.50" width="5.80" height="5.80" fill="#b4b4b9"/><rect x="344.00" y="691.50" width="5.80" height="5.80" fill="#b4b4b9"/><rect x="349.50" y="691.50" width="5.80" height="5.80" fill="#d2d2d6"/><rect x="355.00" y="691.50" width="5.80" height="5.80" fill="#e9e9ec"/><rect x="371.50" y="691.50" width="5.80" height="5.80" fill="#b4b4b9"/><rect x="289.00" y="697.00" width="5.80" height="5.80" fill="#b4b4b9"/><rect x="261.50" y="731.50" width="5.80" height="5.80" fill="#3a3a32"/><rect x="267.00" y="731.50" width="5.80" height="5.80" fill="#2e2c26"/><rect x="272.50" y="731.50" width="5.80" height="5.80" fill="#e6e6e4"/><rect x="256.00" y="737.00" width="5.80" height="5.80" fill="#a5683e"/><rect x="261.50" y="737.00" width="5.80" height="5.80" fill="#3f4a38"/><rect x="267.00" y="737.00" width="5.80" height="5.80" fill="#d49c84"/><rect x="272.50" y="737.00" width="5.80" height="5.80" fill="#7d8a80"/><rect x="278.00" y="737.00" width="5.80" height="5.80" fill="#6e7e77"/><rect x="256.00" y="742.50" width="5.80" height="5.80" fill="#5e5a3c"/><rect x="261.50" y="742.50" width="5.80" height="5.80" fill="#2e3224"/><rect x="267.00" y="742.50" width="5.80" height="5.80" fill="#cf9c80"/><rect x="272.50" y="742.50" width="5.80" height="5.80" fill="#35423a"/><rect x="278.00" y="742.50" width="5.80" height="5.80" fill="#2c3a32"/><rect x="256.00" y="748.00" width="5.80" height="5.80" fill="#2e3a28"/><rect x="261.50" y="748.00" width="5.80" height="5.80" fill="#d8b8a0"/><rect x="267.00" y="748.00" width="5.80" height="5.80" fill="#d4b49c"/><rect x="272.50" y="748.00" width="5.80" height="5.80" fill="#a08c7c"/><rect x="278.00" y="748.00" width="5.80" height="5.80" fill="#3a463c"/><rect x="256.00" y="753.50" width="5.80" height="5.80" fill="#3a4632"/><rect x="261.50" y="753.50" width="5.80" height="5.80" fill="#c8b49c"/><rect x="267.00" y="753.50" width="5.80" height="5.80" fill="#c4ac94"/><rect x="272.50" y="753.50" width="5.80" height="5.80" fill="#8c7464"/><rect x="360.50" y="731.50" width="5.80" height="5.80" fill="#8e8e94"/><rect x="377.00" y="731.50" width="5.80" height="5.80" fill="#8e8e94"/><rect x="289.00" y="737.00" width="5.80" height="5.80" fill="#b4b4b9"/><rect x="294.50" y="737.00" width="5.80" height="5.80" fill="#3a3a40"/><rect x="300.00" y="737.00" width="5.80" height="5.80" fill="#3a3a40"/><rect x="305.50" y="737.00" width="5.80" height="5.80" fill="#3a3a40"/><rect x="311.00" y="737.00" width="5.80" height="5.80" fill="#3a3a40"/><rect x="316.50" y="737.00" width="5.80" height="5.80" fill="#b4b4b9"/><rect x="322.00" y="737.00" width="5.80" height="5.80" fill="#d2d2d6"/><rect x="327.50" y="737.00" width="5.80" height="5.80" fill="#e9e9ec"/><rect x="333.00" y="737.00" width="5.80" height="5.80" fill="#e9e9ec"/><rect x="344.00" y="737.00" width="5.80" height="5.80" fill="#8e8e94"/><rect x="349.50" y="737.00" width="5.80" height="5.80" fill="#d2d2d6"/><rect x="355.00" y="737.00" width="5.80" height="5.80" fill="#8e8e94"/><rect x="360.50" y="737.00" width="5.80" height="5.80" fill="#b4b4b9"/><rect x="366.00" y="737.00" width="5.80" height="5.80" fill="#3a3a40"/><rect x="371.50" y="737.00" width="5.80" height="5.80" fill="#16161c"/><rect x="377.00" y="737.00" width="5.80" height="5.80" fill="#626268"/><rect x="382.50" y="737.00" width="5.80" height="5.80" fill="#8e8e94"/><rect x="388.00" y="737.00" width="5.80" height="5.80" fill="#b4b4b9"/><rect x="289.00" y="752.30" width="5.80" height="5.80" fill="#d2d2d6"/><rect x="294.50" y="752.30" width="5.80" height="5.80" fill="#d2d2d6"/><rect x="300.00" y="752.30" width="5.80" height="5.80" fill="#b4b4b9"/><rect x="305.50" y="752.30" width="5.80" height="5.80" fill="#b4b4b9"/><rect x="311.00" y="752.30" width="5.80" height="5.80" fill="#8e8e94"/><rect x="316.50" y="752.30" width="5.80" height="5.80" fill="#d2d2d6"/><rect x="322.00" y="752.30" width="5.80" height="5.80" fill="#e9e9ec"/><rect x="327.50" y="752.30" width="5.80" height="5.80" fill="#e9e9ec"/><rect x="338.50" y="752.30" width="5.80" height="5.80" fill="#8e8e94"/><rect x="344.00" y="752.30" width="5.80" height="5.80" fill="#8e8e94"/><rect x="349.50" y="752.30" width="5.80" height="5.80" fill="#8e8e94"/><rect x="355.00" y="752.30" width="5.80" height="5.80" fill="#8e8e94"/><rect x="289.00" y="757.80" width="5.80" height="5.80" fill="#b4b4b9"/><rect x="316.50" y="757.80" width="5.80" height="5.80" fill="#b4b4b9"/><rect x="256.00" y="797.60" width="5.80" height="5.80" fill="#f9c3d3"/><rect x="261.50" y="797.60" width="5.80" height="5.80" fill="#f7a9c2"/><rect x="267.00" y="797.60" width="5.80" height="5.80" fill="#f6a6c0"/><rect x="272.50" y="797.60" width="5.80" height="5.80" fill="#f9b9cc"/><rect x="256.00" y="803.10" width="5.80" height="5.80" fill="#f6a5c0"/><rect x="261.50" y="803.10" width="5.80" height="5.80" fill="#f7c0d2"/><rect x="267.00" y="803.10" width="5.80" height="5.80" fill="#f9d4df"/><rect x="272.50" y="803.10" width="5.80" height="5.80" fill="#f6a9c3"/><rect x="278.00" y="803.10" width="5.80" height="5.80" fill="#f9bfd1"/><rect x="256.00" y="808.60" width="5.80" height="5.80" fill="#f6a6c0"/><rect x="261.50" y="808.60" width="5.80" height="5.80" fill="#fbe3ea"/><rect x="267.00" y="808.60" width="5.80" height="5.80" fill="#fbe2e9"/><rect x="272.50" y="808.60" width="5.80" height="5.80" fill="#f6a4bf"/><rect x="278.00" y="808.60" width="5.80" height="5.80" fill="#f8c0d1"/><rect x="256.00" y="814.10" width="5.80" height="5.80" fill="#f8b5cb"/><rect x="261.50" y="814.10" width="5.80" height="5.80" fill="#f5a3bf"/><rect x="267.00" y="814.10" width="5.80" height="5.80" fill="#f6a6c1"/><rect x="272.50" y="814.10" width="5.80" height="5.80" fill="#f7b3c9"/><rect x="261.50" y="819.60" width="5.80" height="5.80" fill="#f9c5d5"/><rect x="267.00" y="819.60" width="5.80" height="5.80" fill="#f8bdd0"/><rect x="289.00" y="798.00" width="5.80" height="5.80" fill="#b4b4b9"/><rect x="294.50" y="798.00" width="5.80" height="5.80" fill="#626268"/><rect x="300.00" y="798.00" width="5.80" height="5.80" fill="#8e8e94"/><rect x="305.50" y="798.00" width="5.80" height="5.80" fill="#b4b4b9"/><rect x="289.00" y="814.50" width="5.80" height="5.80" fill="#b4b4b9"/><rect x="305.50" y="814.50" width="5.80" height="5.80" fill="#e9e9ec"/><rect x="311.00" y="814.50" width="5.80" height="5.80" fill="#e9e9ec"/><rect x="316.50" y="814.50" width="5.80" height="5.80" fill="#e9e9ec"/><rect x="322.00" y="814.50" width="5.80" height="5.80" fill="#e9e9ec"/><rect x="327.50" y="814.50" width="5.80" height="5.80" fill="#e9e9ec"/><rect x="289.00" y="820.00" width="5.80" height="5.80" fill="#d2d2d6"/><rect x="300.00" y="820.00" width="5.80" height="5.80" fill="#b4b4b9"/><rect x="311.00" y="820.00" width="5.80" height="5.80" fill="#8e8e94"/><rect x="316.50" y="820.00" width="5.80" height="5.80" fill="#8e8e94"/><rect x="322.00" y="820.00" width="5.80" height="5.80" fill="#b4b4b9"/><rect x="261.50" y="853.00" width="5.80" height="5.80" fill="#e7d7c0"/><rect x="267.00" y="853.00" width="5.80" height="5.80" fill="#d8b88c"/><rect x="272.50" y="853.00" width="5.80" height="5.80" fill="#e9e3d6"/><rect x="256.00" y="858.50" width="5.80" height="5.80" fill="#e0ccb0"/><rect x="261.50" y="858.50" width="5.80" height="5.80" fill="#c89a6e"/><rect x="267.00" y="858.50" width="5.80" height="5.80" fill="#d3ac80"/><rect x="272.50" y="858.50" width="5.80" height="5.80" fill="#b5b8a6"/><rect x="278.00" y="858.50" width="5.80" height="5.80" fill="#a8ac98"/><rect x="256.00" y="864.00" width="5.80" height="5.80" fill="#d9c2a4"/><rect x="261.50" y="864.00" width="5.80" height="5.80" fill="#c6784e"/><rect x="267.00" y="864.00" width="5.80" height="5.80" fill="#a86a48"/><rect x="272.50" y="864.00" width="5.80" height="5.80" fill="#5e5040"/><rect x="278.00" y="864.00" width="5.80" height="5.80" fill="#2c261e"/><rect x="256.00" y="869.50" width="5.80" height="5.80" fill="#e4c8b0"/><rect x="261.50" y="869.50" width="5.80" height="5.80" fill="#d9a88c"/><rect x="267.00" y="869.50" width="5.80" height="5.80" fill="#8a6c54"/><rect x="272.50" y="869.50" width="5.80" height="5.80" fill="#6e5a48"/><rect x="278.00" y="869.50" width="5.80" height="5.80" fill="#3c2e24"/><rect x="256.00" y="875.00" width="5.80" height="5.80" fill="#ecdcc8"/><rect x="261.50" y="875.00" width="5.80" height="5.80" fill="#6e5c4a"/><rect x="267.00" y="875.00" width="5.80" height="5.80" fill="#5e564c"/><rect x="272.50" y="875.00" width="5.80" height="5.80" fill="#a8a29a"/><rect x="278.00" y="875.00" width="5.80" height="5.80" fill="#e8e6e2"/><rect x="289.00" y="858.90" width="5.80" height="5.80" fill="#d2d2d6"/><rect x="294.50" y="858.90" width="5.80" height="5.80" fill="#d2d2d6"/><rect x="300.00" y="858.90" width="5.80" height="5.80" fill="#b4b4b9"/><rect x="305.50" y="858.90" width="5.80" height="5.80" fill="#b4b4b9"/><rect x="311.00" y="858.90" width="5.80" height="5.80" fill="#3a3a40"/><rect x="316.50" y="858.90" width="5.80" height="5.80" fill="#3a3a40"/><rect x="322.00" y="858.90" width="5.80" height="5.80" fill="#3a3a40"/><rect x="327.50" y="858.90" width="5.80" height="5.80" fill="#3a3a40"/><rect x="333.00" y="858.90" width="5.80" height="5.80" fill="#8e8e94"/><rect x="338.50" y="858.90" width="5.80" height="5.80" fill="#b4b4b9"/><rect x="344.00" y="858.90" width="5.80" height="5.80" fill="#8e8e94"/><rect x="349.50" y="858.90" width="5.80" height="5.80" fill="#8e8e94"/><rect x="355.00" y="858.90" width="5.80" height="5.80" fill="#e9e9ec"/><rect x="360.50" y="858.90" width="5.80" height="5.80" fill="#626268"/><rect x="366.00" y="858.90" width="5.80" height="5.80" fill="#8e8e94"/><rect x="371.50" y="858.90" width="5.80" height="5.80" fill="#626268"/><rect x="377.00" y="858.90" width="5.80" height="5.80" fill="#3a3a40"/><rect x="382.50" y="858.90" width="5.80" height="5.80" fill="#d2d2d6"/><rect x="388.00" y="858.90" width="5.80" height="5.80" fill="#8e8e94"/><rect x="404.50" y="858.90" width="5.80" height="5.80" fill="#e9e9ec"/><rect x="410.00" y="858.90" width="5.80" height="5.80" fill="#8e8e94"/><rect x="415.50" y="858.90" width="5.80" height="5.80" fill="#3a3a40"/><rect x="421.00" y="858.90" width="5.80" height="5.80" fill="#626268"/><rect x="426.50" y="858.90" width="5.80" height="5.80" fill="#8e8e94"/><rect x="432.00" y="858.90" width="5.80" height="5.80" fill="#b4b4b9"/><rect x="437.50" y="858.90" width="5.80" height="5.80" fill="#e9e9ec"/><rect x="415.50" y="864.40" width="5.80" height="5.80" fill="#8e8e94"/><rect x="289.00" y="875.70" width="5.80" height="5.80" fill="#b4b4b9"/><rect x="322.00" y="875.70" width="5.80" height="5.80" fill="#e9e9ec"/><rect x="327.50" y="875.70" width="5.80" height="5.80" fill="#e9e9ec"/><rect x="333.00" y="875.70" width="5.80" height="5.80" fill="#b4b4b9"/><rect x="289.00" y="881.20" width="5.80" height="5.80" fill="#d2d2d6"/><rect x="294.50" y="881.20" width="5.80" height="5.80" fill="#e9e9ec"/><rect x="300.00" y="881.20" width="5.80" height="5.80" fill="#e9e9ec"/><rect x="316.50" y="881.20" width="5.80" height="5.80" fill="#8e8e94"/><rect x="322.00" y="881.20" width="5.80" height="5.80" fill="#8e8e94"/><rect x="327.50" y="881.20" width="5.80" height="5.80" fill="#b4b4b9"/><rect x="333.00" y="881.20" width="5.80" height="5.80" fill="#b4b4b9"/><rect x="338.50" y="881.20" width="5.80" height="5.80" fill="#b4b4b9"/><rect x="911.00" y="618.50" width="5.80" height="5.80" fill="#d2d2d6"/><rect x="922.00" y="618.50" width="5.80" height="5.80" fill="#b4b4b9"/><rect x="927.50" y="618.50" width="5.80" height="5.80" fill="#b4b4b9"/><rect x="911" y="681" width="11.5" height="11" fill="#8e8e94"/><rect x="916.5" y="681" width="6" height="11" fill="#c6c6ca"/><rect x="927.5" y="681" width="11" height="5.5" fill="#6e6e74"/><rect x="927.5" y="686.5" width="11" height="5.5" fill="#b4b4b9"/><rect x="911" y="742.5" width="11.5" height="11" fill="#7c7c82"/><rect x="916.5" y="748" width="6" height="5.5" fill="#eeeef0"/><rect x="927.5" y="742.5" width="11" height="11" fill="#8a8a90"/><rect x="933" y="742.5" width="5.5" height="5.5" fill="#c0c0c4"/><rect x="911" y="804" width="11.5" height="11" fill="#8e8e94"/><rect x="916.5" y="809.5" width="6" height="5.5" fill="#f0f0f2"/><rect x="927.5" y="804" width="11" height="11" fill="#a0a0a6"/><rect x="933" y="804" width="5.5" height="5.5" fill="#c4c4c8"/><rect x="911" y="867.5" width="6" height="5.5" fill="#8e8e94"/><rect x="916.5" y="867.5" width="6" height="5.5" fill="#d8d8dc"/><rect x="927.5" y="867.5" width="5.5" height="5.5" fill="#d0d0d4"/><rect x="933" y="864" width="5.5" height="9" fill="#6a6a70"/><rect x="516.50" y="609.20" width="5.80" height="5.80" fill="#3f63db"/><rect x="588.00" y="609.20" width="5.80" height="5.80" fill="#3f63db"/><rect x="626.50" y="609.20" width="5.80" height="5.80" fill="#1f47d2"/><rect x="665.00" y="609.20" width="5.80" height="5.80" fill="#1f47d2"/><rect x="703.50" y="609.20" width="5.80" height="5.80" fill="#c4cdf3"/><rect x="511.00" y="614.70" width="5.80" height="5.80" fill="#e6e9fb"/><rect x="516.50" y="614.70" width="5.80" height="5.80" fill="#e6e9fb"/><rect x="522.00" y="614.70" width="5.80" height="5.80" fill="#c4cdf3"/><rect x="527.50" y="614.70" width="5.80" height="5.80" fill="#6f86e6"/><rect x="533.00" y="614.70" width="5.80" height="5.80" fill="#3f63db"/><rect x="538.50" y="614.70" width="5.80" height="5.80" fill="#3f63db"/><rect x="544.00" y="614.70" width="5.80" height="5.80" fill="#9aa9ee"/><rect x="549.50" y="614.70" width="5.80" height="5.80" fill="#e6e9fb"/><rect x="555.00" y="614.70" width="5.80" height="5.80" fill="#6f86e6"/><rect x="560.50" y="614.70" width="5.80" height="5.80" fill="#9aa9ee"/><rect x="566.00" y="614.70" width="5.80" height="5.80" fill="#c4cdf3"/><rect x="571.50" y="614.70" width="5.80" height="5.80" fill="#6f86e6"/><rect x="588.00" y="614.70" width="5.80" height="5.80" fill="#c4cdf3"/><rect x="593.50" y="614.70" width="5.80" height="5.80" fill="#6f86e6"/><rect x="599.00" y="614.70" width="5.80" height="5.80" fill="#3f63db"/><rect x="604.50" y="614.70" width="5.80" height="5.80" fill="#3f63db"/><rect x="610.00" y="614.70" width="5.80" height="5.80" fill="#9aa9ee"/><rect x="615.50" y="614.70" width="5.80" height="5.80" fill="#c4cdf3"/><rect x="626.50" y="614.70" width="5.80" height="5.80" fill="#3f63db"/><rect x="632.00" y="614.70" width="5.80" height="5.80" fill="#9aa9ee"/><rect x="637.50" y="614.70" width="5.80" height="5.80" fill="#9aa9ee"/><rect x="643.00" y="614.70" width="5.80" height="5.80" fill="#9aa9ee"/><rect x="648.50" y="614.70" width="5.80" height="5.80" fill="#9aa9ee"/><rect x="659.50" y="614.70" width="5.80" height="5.80" fill="#c4cdf3"/><rect x="665.00" y="614.70" width="5.80" height="5.80" fill="#3f63db"/><rect x="676.00" y="614.70" width="5.80" height="5.80" fill="#9aa9ee"/><rect x="681.50" y="614.70" width="5.80" height="5.80" fill="#c4cdf3"/><rect x="687.00" y="614.70" width="5.80" height="5.80" fill="#9aa9ee"/><rect x="692.50" y="614.70" width="5.80" height="5.80" fill="#e6e9fb"/><rect x="698.00" y="614.70" width="5.80" height="5.80" fill="#3f63db"/><rect x="703.50" y="614.70" width="5.80" height="5.80" fill="#1f47d2"/><rect x="709.00" y="614.70" width="5.80" height="5.80" fill="#1f47d2"/><rect x="714.50" y="614.70" width="5.80" height="5.80" fill="#6f86e6"/><rect x="720.00" y="614.70" width="5.80" height="5.80" fill="#9aa9ee"/><rect x="725.50" y="614.70" width="5.80" height="5.80" fill="#9aa9ee"/><rect x="731.00" y="614.70" width="5.80" height="5.80" fill="#3f63db"/><rect x="736.50" y="614.70" width="5.80" height="5.80" fill="#6f86e6"/><rect x="742.00" y="614.70" width="5.80" height="5.80" fill="#0f35c0"/><rect x="527.50" y="625.50" width="5.80" height="5.80" fill="#e6e9fb"/><rect x="511.00" y="631.00" width="5.80" height="5.80" fill="#1f47d2"/><rect x="516.50" y="631.00" width="5.80" height="5.80" fill="#9aa9ee"/><rect x="522.00" y="631.00" width="5.80" height="5.80" fill="#9aa9ee"/><rect x="527.50" y="636.50" width="5.80" height="5.80" fill="#9aa9ee"/><rect x="516.50" y="681.30" width="5.80" height="5.80" fill="#6f86e6"/><rect x="588.00" y="681.30" width="5.80" height="5.80" fill="#6f86e6"/><rect x="626.50" y="681.30" width="5.80" height="5.80" fill="#9aa9ee"/><rect x="665.00" y="681.30" width="5.80" height="5.80" fill="#9aa9ee"/><rect x="516.50" y="686.80" width="5.80" height="5.80" fill="#e6e9fb"/><rect x="522.00" y="686.80" width="5.80" height="5.80" fill="#e6e9fb"/><rect x="527.50" y="686.80" width="5.80" height="5.80" fill="#9aa9ee"/><rect x="533.00" y="686.80" width="5.80" height="5.80" fill="#3f63db"/><rect x="538.50" y="686.80" width="5.80" height="5.80" fill="#9aa9ee"/><rect x="549.50" y="686.80" width="5.80" height="5.80" fill="#6f86e6"/><rect x="560.50" y="686.80" width="5.80" height="5.80" fill="#6f86e6"/><rect x="566.00" y="686.80" width="5.80" height="5.80" fill="#e6e9fb"/><rect x="571.50" y="686.80" width="5.80" height="5.80" fill="#6f86e6"/><rect x="588.00" y="686.80" width="5.80" height="5.80" fill="#e6e9fb"/><rect x="593.50" y="686.80" width="5.80" height="5.80" fill="#9aa9ee"/><rect x="599.00" y="686.80" width="5.80" height="5.80" fill="#3f63db"/><rect x="604.50" y="686.80" width="5.80" height="5.80" fill="#3f63db"/><rect x="610.00" y="686.80" width="5.80" height="5.80" fill="#c4cdf3"/><rect x="626.50" y="686.80" width="5.80" height="5.80" fill="#9aa9ee"/><rect x="632.00" y="686.80" width="5.80" height="5.80" fill="#c4cdf3"/><rect x="637.50" y="686.80" width="5.80" height="5.80" fill="#c4cdf3"/><rect x="643.00" y="686.80" width="5.80" height="5.80" fill="#9aa9ee"/><rect x="648.50" y="686.80" width="5.80" height="5.80" fill="#9aa9ee"/><rect x="659.50" y="686.80" width="5.80" height="5.80" fill="#c4cdf3"/><rect x="665.00" y="686.80" width="5.80" height="5.80" fill="#9aa9ee"/><rect x="670.50" y="686.80" width="5.80" height="5.80" fill="#e6e9fb"/><rect x="676.00" y="686.80" width="5.80" height="5.80" fill="#e6e9fb"/><rect x="681.50" y="686.80" width="5.80" height="5.80" fill="#6f86e6"/><rect x="687.00" y="686.80" width="5.80" height="5.80" fill="#c4cdf3"/><rect x="692.50" y="686.80" width="5.80" height="5.80" fill="#3f63db"/><rect x="698.00" y="686.80" width="5.80" height="5.80" fill="#0f35c0"/><rect x="516.50" y="742.80" width="5.80" height="5.80" fill="#6f86e6"/><rect x="588.00" y="742.80" width="5.80" height="5.80" fill="#6f86e6"/><rect x="626.50" y="742.80" width="5.80" height="5.80" fill="#9aa9ee"/><rect x="665.00" y="742.80" width="5.80" height="5.80" fill="#9aa9ee"/><rect x="516.50" y="748.30" width="5.80" height="5.80" fill="#e6e9fb"/><rect x="522.00" y="748.30" width="5.80" height="5.80" fill="#e6e9fb"/><rect x="527.50" y="748.30" width="5.80" height="5.80" fill="#9aa9ee"/><rect x="533.00" y="748.30" width="5.80" height="5.80" fill="#3f63db"/><rect x="538.50" y="748.30" width="5.80" height="5.80" fill="#9aa9ee"/><rect x="549.50" y="748.30" width="5.80" height="5.80" fill="#6f86e6"/><rect x="560.50" y="748.30" width="5.80" height="5.80" fill="#6f86e6"/><rect x="566.00" y="748.30" width="5.80" height="5.80" fill="#e6e9fb"/><rect x="571.50" y="748.30" width="5.80" height="5.80" fill="#6f86e6"/><rect x="588.00" y="748.30" width="5.80" height="5.80" fill="#e6e9fb"/><rect x="593.50" y="748.30" width="5.80" height="5.80" fill="#9aa9ee"/><rect x="599.00" y="748.30" width="5.80" height="5.80" fill="#3f63db"/><rect x="604.50" y="748.30" width="5.80" height="5.80" fill="#3f63db"/><rect x="610.00" y="748.30" width="5.80" height="5.80" fill="#c4cdf3"/><rect x="626.50" y="748.30" width="5.80" height="5.80" fill="#9aa9ee"/><rect x="632.00" y="748.30" width="5.80" height="5.80" fill="#c4cdf3"/><rect x="637.50" y="748.30" width="5.80" height="5.80" fill="#c4cdf3"/><rect x="643.00" y="748.30" width="5.80" height="5.80" fill="#9aa9ee"/><rect x="648.50" y="748.30" width="5.80" height="5.80" fill="#9aa9ee"/><rect x="659.50" y="748.30" width="5.80" height="5.80" fill="#c4cdf3"/><rect x="665.00" y="748.30" width="5.80" height="5.80" fill="#9aa9ee"/><rect x="670.50" y="748.30" width="5.80" height="5.80" fill="#e6e9fb"/><rect x="676.00" y="748.30" width="5.80" height="5.80" fill="#e6e9fb"/><rect x="681.50" y="748.30" width="5.80" height="5.80" fill="#6f86e6"/><rect x="687.00" y="748.30" width="5.80" height="5.80" fill="#c4cdf3"/><rect x="692.50" y="748.30" width="5.80" height="5.80" fill="#3f63db"/><rect x="698.00" y="748.30" width="5.80" height="5.80" fill="#0f35c0"/><rect x="506.00" y="806.80" width="5.80" height="5.80" fill="#e6e9fb"/><rect x="511.50" y="806.80" width="5.80" height="5.80" fill="#e6e9fb"/><rect x="517.00" y="806.80" width="5.80" height="5.80" fill="#c4cdf3"/><rect x="522.50" y="806.80" width="5.80" height="5.80" fill="#9aa9ee"/><rect x="528.00" y="806.80" width="5.80" height="5.80" fill="#9aa9ee"/><rect x="533.50" y="806.80" width="5.80" height="5.80" fill="#9aa9ee"/><rect x="539.00" y="806.80" width="5.80" height="5.80" fill="#c4cdf3"/><rect x="544.50" y="806.80" width="5.80" height="5.80" fill="#c4cdf3"/><rect x="550.00" y="806.80" width="5.80" height="5.80" fill="#3f63db"/><rect x="555.50" y="806.80" width="5.80" height="5.80" fill="#3f63db"/><rect x="572.00" y="806.80" width="5.80" height="5.80" fill="#c4cdf3"/><rect x="577.50" y="806.80" width="5.80" height="5.80" fill="#c4cdf3"/><rect x="583.00" y="806.80" width="5.80" height="5.80" fill="#6f86e6"/><rect x="588.50" y="806.80" width="5.80" height="5.80" fill="#e6e9fb"/><rect x="627.00" y="806.80" width="5.80" height="5.80" fill="#e6e9fb"/><rect x="632.50" y="806.80" width="5.80" height="5.80" fill="#9aa9ee"/><rect x="638.00" y="806.80" width="5.80" height="5.80" fill="#9aa9ee"/><rect x="643.50" y="806.80" width="5.80" height="5.80" fill="#9aa9ee"/><rect x="649.00" y="806.80" width="5.80" height="5.80" fill="#6f86e6"/><rect x="654.50" y="806.80" width="5.80" height="5.80" fill="#9aa9ee"/><rect x="660.00" y="806.80" width="5.80" height="5.80" fill="#9aa9ee"/><rect x="665.50" y="806.80" width="5.80" height="5.80" fill="#e6e9fb"/><rect x="671.00" y="806.80" width="5.80" height="5.80" fill="#c4cdf3"/><rect x="676.50" y="806.80" width="5.80" height="5.80" fill="#3f63db"/><rect x="682.00" y="806.80" width="5.80" height="5.80" fill="#3f63db"/><rect x="687.50" y="806.80" width="5.80" height="5.80" fill="#3f63db"/><rect x="693.00" y="806.80" width="5.80" height="5.80" fill="#3f63db"/><rect x="522.50" y="812.30" width="5.80" height="5.80" fill="#c4cdf3"/><rect x="594.00" y="812.30" width="5.80" height="5.80" fill="#c4cdf3"/><rect x="665.50" y="812.30" width="5.80" height="5.80" fill="#c4cdf3"/><rect x="506.00" y="868.40" width="5.80" height="5.80" fill="#e6e9fb"/><rect x="511.50" y="868.40" width="5.80" height="5.80" fill="#e6e9fb"/><rect x="517.00" y="868.40" width="5.80" height="5.80" fill="#c4cdf3"/><rect x="522.50" y="868.40" width="5.80" height="5.80" fill="#9aa9ee"/><rect x="528.00" y="868.40" width="5.80" height="5.80" fill="#9aa9ee"/><rect x="533.50" y="868.40" width="5.80" height="5.80" fill="#9aa9ee"/><rect x="539.00" y="868.40" width="5.80" height="5.80" fill="#c4cdf3"/><rect x="544.50" y="868.40" width="5.80" height="5.80" fill="#c4cdf3"/><rect x="550.00" y="868.40" width="5.80" height="5.80" fill="#3f63db"/><rect x="555.50" y="868.40" width="5.80" height="5.80" fill="#3f63db"/><rect x="572.00" y="868.40" width="5.80" height="5.80" fill="#c4cdf3"/><rect x="577.50" y="868.40" width="5.80" height="5.80" fill="#c4cdf3"/><rect x="583.00" y="868.40" width="5.80" height="5.80" fill="#6f86e6"/><rect x="588.50" y="868.40" width="5.80" height="5.80" fill="#e6e9fb"/><rect x="627.00" y="868.40" width="5.80" height="5.80" fill="#e6e9fb"/><rect x="632.50" y="868.40" width="5.80" height="5.80" fill="#9aa9ee"/><rect x="638.00" y="868.40" width="5.80" height="5.80" fill="#9aa9ee"/><rect x="643.50" y="868.40" width="5.80" height="5.80" fill="#9aa9ee"/><rect x="649.00" y="868.40" width="5.80" height="5.80" fill="#6f86e6"/><rect x="654.50" y="868.40" width="5.80" height="5.80" fill="#9aa9ee"/><rect x="660.00" y="868.40" width="5.80" height="5.80" fill="#9aa9ee"/><rect x="665.50" y="868.40" width="5.80" height="5.80" fill="#e6e9fb"/><rect x="671.00" y="868.40" width="5.80" height="5.80" fill="#c4cdf3"/><rect x="676.50" y="868.40" width="5.80" height="5.80" fill="#3f63db"/><rect x="682.00" y="868.40" width="5.80" height="5.80" fill="#3f63db"/><rect x="687.50" y="868.40" width="5.80" height="5.80" fill="#3f63db"/><rect x="693.00" y="868.40" width="5.80" height="5.80" fill="#3f63db"/><rect x="522.50" y="873.90" width="5.80" height="5.80" fill="#c4cdf3"/><rect x="594.00" y="873.90" width="5.80" height="5.80" fill="#c4cdf3"/><rect x="665.50" y="873.90" width="5.80" height="5.80" fill="#c4cdf3"/><ellipse cx="268.5" cy="923" rx="9" ry="7" fill="#3a3630"/></svg>
<!--/TABLE-->
</div>
</div>
</body>
</html>
